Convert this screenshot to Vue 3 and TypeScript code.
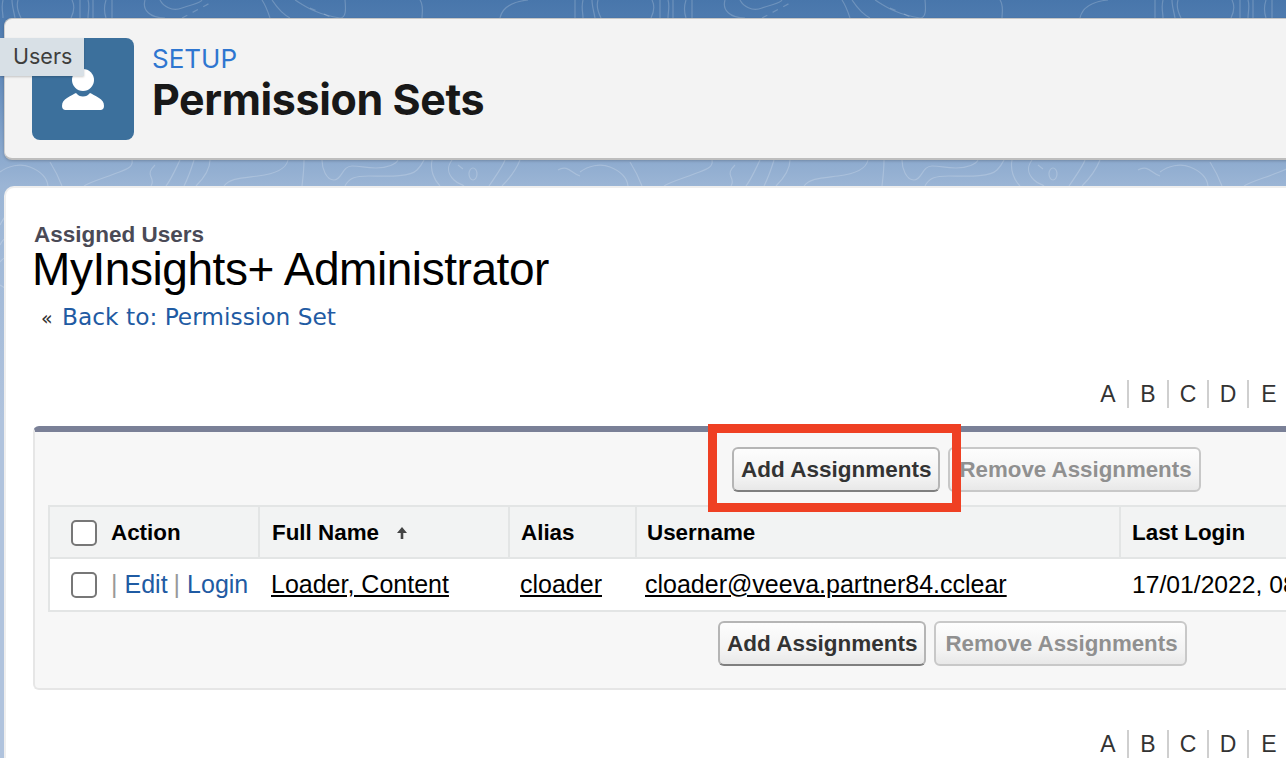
<template>
  <div class="page">
    <svg class="contours" width="1286" height="420" viewBox="0 0 1286 420" fill="none" stroke="#ffffff" stroke-opacity="0.2" stroke-width="1.2">
      <g v-for="x in tileOffsets" :key="x" :transform="`translate(${x} 0)`">
        <path v-for="(d, i) in contours" :key="i" :d="d" />
        <path d="M182 18l30-16M310 8l10 4M324 14l12 6" stroke-dasharray="6 6" />
        <ellipse cx="473" cy="174" rx="4" ry="6" />
      </g>
      <path d="M0 225c2-4 3-6 5-8M0 245c2-4 3-6 5-6M0 262c2-2 3-4 5-4M0 285l5 3" />
    </svg>

    <header class="page-header">
      <div class="header-icon">
        <svg width="44" height="46" viewBox="0 0 44 46" fill="#fff">
          <circle cx="22" cy="15" r="11" />
          <path d="M1 41c0-4 2-6 5-8 4-2.500 7-4 9-5 2 2.500 4 3.500 7 3.500s5-1 7-3.500c2 1 5 2.500 9 5 3 2 5 4 5 8 0 2.500-1.500 4-3.500 4H4.500C2.500 45 1 43.500 1 41z" />
        </svg>
      </div>
      <div class="header-text">
        <div class="eyebrow">SETUP</div>
        <h1>Permission Sets</h1>
      </div>
    </header>

    <main class="content">
      <div class="subtitle">Assigned Users</div>
      <h2>MyInsights+ Administrator</h2>
      <div class="back"><span class="back-mark">«</span> <a>Back to: Permission Set</a></div>

      <div class="alpha alpha-top">
        <span v-for="l in letters" :key="l">{{ l }}</span>
      </div>

      <section class="panel">
        <div class="buttons buttons-top">
          <button class="btn">Add Assignments</button>
          <button class="btn disabled">Remove Assignments</button>
        </div>

        <div class="table">
          <div class="row head">
            <div class="cell col-action"><span class="check"></span>Action</div>
            <div class="cell col-name">
              Full Name
              <svg class="sort" width="12" height="14" viewBox="0 0 12 14" fill="#444">
                <path d="M6 1 11 7H7.300V13H4.700V7H1z" />
              </svg>
            </div>
            <div class="cell col-alias">Alias</div>
            <div class="cell col-user">Username</div>
            <div class="cell col-login">Last Login</div>
          </div>
          <div class="row body">
            <div class="cell col-action">
              <span class="check"></span>
              <span class="sep">|</span><a>Edit</a><span class="sep">|</span><a>Login</a>
            </div>
            <div class="cell col-name"><u>Loader, Content</u></div>
            <div class="cell col-alias"><u>cloader</u></div>
            <div class="cell col-user"><u>cloader@veeva.partner84.cclear</u></div>
            <div class="cell col-login">17/01/2022, 08</div>
          </div>
        </div>

        <div class="buttons buttons-bottom">
          <button class="btn">Add Assignments</button>
          <button class="btn disabled">Remove Assignments</button>
        </div>
      </section>

      <div class="alpha alpha-bottom">
        <span v-for="l in letters" :key="l">{{ l }}</span>
      </div>
    </main>

    <div class="tooltip">Users</div>
    <div class="callout"></div>
  </div>
</template>

<script setup lang="ts">
const letters: string[] = ["A", "B", "C", "D", "E"];

// the background map repeats about every 580px
const tileOffsets: number[] = [0, 580, 1160];

const contours: string[] = [
  // top strip
  "M-5 0v18M3 0c-2 8 0 12 0 18M12 0c0 6 2 12 3 18M18 0c-2 6 0 12 3 18",
  "M72 0c3 6 2 12-1 18M80 0v18M88 0c2 6 0 12 0 18M93 0v18M106 0c-2 6-2 12 0 18M112 0v18",
  "M145 0c-3 10 5 18 20 18M160 0c3 6 12 12 22 8s18-4 20-8",
  "M262 0c4 6 6 12 8 18M272 0c4 6 10 14 18 18M295 0c10 6 20 14 45 18 6 0 6-8 5-18",
  "M420 0c4 6 2 12 2 18M500 18c2-10 10-16 28-18",
  // strip between the cards
  "M0 172c8-6 20-9 30-5s17 10 18 19",
  "M50 162c5 8 9 16 12 24",
  "M132 160c2 8-8 10-18 14s-24 8-30 12",
  "M155 165c-5 5-6 8-4 12s2 6 0 9",
  "M180 160c-4 8-8 18-14 26M194 160c-3 10-6 18-10 26M210 160c0 10-6 18-14 26",
  "M288 160c-2 10-14 14-30 16s-28 2-34 10",
  "M304 160c0 9-1 18-2 26",
  "M322 160c0 8 4 20 12 20s8-14 18-14 12 2 24 2 20-4 22-8",
  "M345 186c4-8 10-10 24-10s40 2 48-6c5-5 6-8 7-10",
  "M432 160c-2 10 2 20 8 26",
  "M452 160c-6 8-4 14 2 20 4 4 8 4 10 6M458 165l5 4",
  "M505 160c-2 6-8 14-16 26M520 160c-4 10-10 18-18 26",
  "M558 170c10-6 14 4 22 6",
];
</script>

<style>
body {
  margin: 0;
  background: #fff;
}
</style>

<style scoped>
.page {
  position: relative;
  width: 1286px;
  height: 758px;
  overflow: hidden;
  padding: 18px 0 0 4px;
  box-sizing: border-box;
  background: linear-gradient(180deg, #4876ab 0, #5f88b9 70px, #9bb5d5 186px, #b0c3dd 420px);
  font-family: "Liberation Sans", Arial, sans-serif;
  color: #000;
}

.contours {
  position: absolute;
  left: 0;
  top: 0;
}

.page-header {
  position: relative;
  display: flex;
  align-items: center;
  gap: 18px;
  height: 142px;
  box-sizing: border-box;
  padding-left: 27px;
  width: 1300px;
  background: #f3f3f3;
  border-radius: 8px 0 0 8px;
  border: 1px solid #cfcfcf;
  border-width: 1px 0 2px 1px;
  border-top-color: #c6c6c6;
  border-bottom-color: #bdbdbd;
  box-shadow: 0 1px 3px rgba(0, 0, 0, 0.2);
}

.header-icon {
  width: 102px;
  height: 102px;
  border-radius: 8px;
  background: #3c709c;
  display: flex;
  align-items: center;
  justify-content: center;
  flex: none;
  padding-bottom: 2px;
  box-sizing: border-box;
}

.header-text {
  font-family: Inter, sans-serif;
  margin-top: -9px;
}

.eyebrow {
  font-size: 26px;
  line-height: 28px;
  color: #2e76d0;
}

h1 {
  margin: 1px 0 0;
  font-size: 43px;
  line-height: 50px;
  font-weight: 700;
  letter-spacing: -0.4px;
  color: #181818;
}

.content {
  position: relative;
  margin-top: 26px;
  width: 1300px;
  height: 580px;
  background: #fff;
  border: 2px solid #eeeeee;
  border-width: 2px 0 0 2px;
  border-top-left-radius: 10px;
  padding: 35px 0 0 27px;
  box-sizing: border-box;
}

.subtitle {
  font-size: 22.5px;
  line-height: 24px;
  font-weight: 700;
  color: #4a4a56;
  padding-left: 1px;
}

h2 {
  margin: -1px 0 0 -1px;
  font-size: 46px;
  line-height: 46px;
  font-weight: 400;
  letter-spacing: -0.44px;
}

.back {
  margin-top: 11px;
  padding-left: 8px;
  font-family: "DejaVu Sans", sans-serif;
  font-size: 23.3px;
  line-height: 28px;
  color: #333;
}

.back-mark {
  font-size: 19px;
  margin-right: 2px;
}

a {
  color: #1f5ba3;
}

.alpha {
  display: flex;
  font-size: 23px;
  line-height: 28px;
  color: #333;
}

.alpha span {
  width: 40px;
  text-align: center;
  border-right: 2px solid #cfcfcf;
  box-sizing: border-box;
}

.alpha span:last-child {
  border-right: 0;
}

.alpha-top {
  margin: 48px 0 18px 1056px;
}

.alpha-bottom {
  margin: 40px 0 0 1056px;
}

.panel {
  width: 1290px;
  height: 264px;
  box-sizing: border-box;
  background: #f7f7f7;
  border-top: 6px solid #7a8097;
  border-left: 2px solid #e6e6e6;
  border-bottom: 2px solid #e6e6e6;
  border-radius: 6px 0 0 6px;
  padding-left: 13px;
}

.buttons {
  display: flex;
  gap: 8px;
}

.buttons-top {
  padding: 15px 0 13px 684px;
}

.buttons-bottom {
  padding: 9px 0 0 670px;
}

.btn {
  height: 45px;
  padding: 0 7px;
  font-family: "Liberation Sans", Arial, sans-serif;
  font-size: 22.5px;
  font-weight: 700;
  color: #333;
  background: linear-gradient(180deg, #fdfdfd 0%, #f2f2f2 70%, #e8e8e8 100%);
  border: 2px solid #b5b5b5;
  border-bottom-color: #7f7f7f;
  border-radius: 6px;
  white-space: nowrap;
}

.btn.disabled {
  padding: 0 7px 0 9px;
  font-size: 22.3px;
  color: #909090;
  border-color: #c8c8c8;
}

.table {
  width: 1300px;
  border: 2px solid #e3e5e5;
  border-width: 2px 0 2px 2px;
}

.row {
  display: flex;
  align-items: stretch;
}

.row.head {
  height: 50px;
  background: #f2f3f3;
  font-size: 22.4px;
  font-weight: 700;
  border-bottom: 2px solid #e3e5e5;
}

.row.head .cell {
  padding-top: 2px;
}

.row.body {
  height: 51px;
  background: #fff;
  font-size: 25px;
}

.cell {
  display: flex;
  align-items: center;
  box-sizing: border-box;
  padding-left: 11px;
  white-space: nowrap;
}

.head .cell + .cell {
  border-left: 2px solid #e3e5e5;
}

.col-action {
  width: 208px;
}

.cell.col-action {
  padding-left: 21px;
}

.col-name {
  width: 250px;
}

.head .col-name {
  padding-left: 12px;
}

.col-alias {
  width: 127px;
}

.col-user {
  width: 484px;
}

.col-login {
  flex: 1;
}

.head .col-user {
  padding-left: 10px;
}

.body .col-name {
  padding-left: 13px;
}

.body .col-alias {
  padding-left: 12px;
}

.body .col-user {
  padding-left: 10px;
}

.body .col-login {
  padding-left: 13px;
  font-size: 24.7px;
}

.check {
  width: 26px;
  height: 26px;
  box-sizing: border-box;
  border: 2px solid #777;
  border-radius: 5px;
  background: #fff;
  margin-right: 14px;
  flex: none;
}

.sep {
  color: #999;
  margin-right: 7px;
}

.sep + a + .sep {
  margin-left: 6px;
}

.sort {
  margin-left: 17px;
}

.tooltip {
  position: absolute;
  left: 0;
  top: 38px;
  width: 84px;
  height: 38px;
  box-sizing: border-box;
  padding-left: 13px;
  background: #d8e0e6;
  box-shadow: 0 1px 2px rgba(0, 0, 0, 0.2);
  font-family: Inter, sans-serif;
  font-size: 21.5px;
  line-height: 37px;
  color: #3e3e3c;
}

.callout {
  position: absolute;
  left: 708px;
  top: 424px;
  width: 253px;
  height: 88px;
  box-sizing: border-box;
  border: 9px solid #ef4023;
}
</style>
